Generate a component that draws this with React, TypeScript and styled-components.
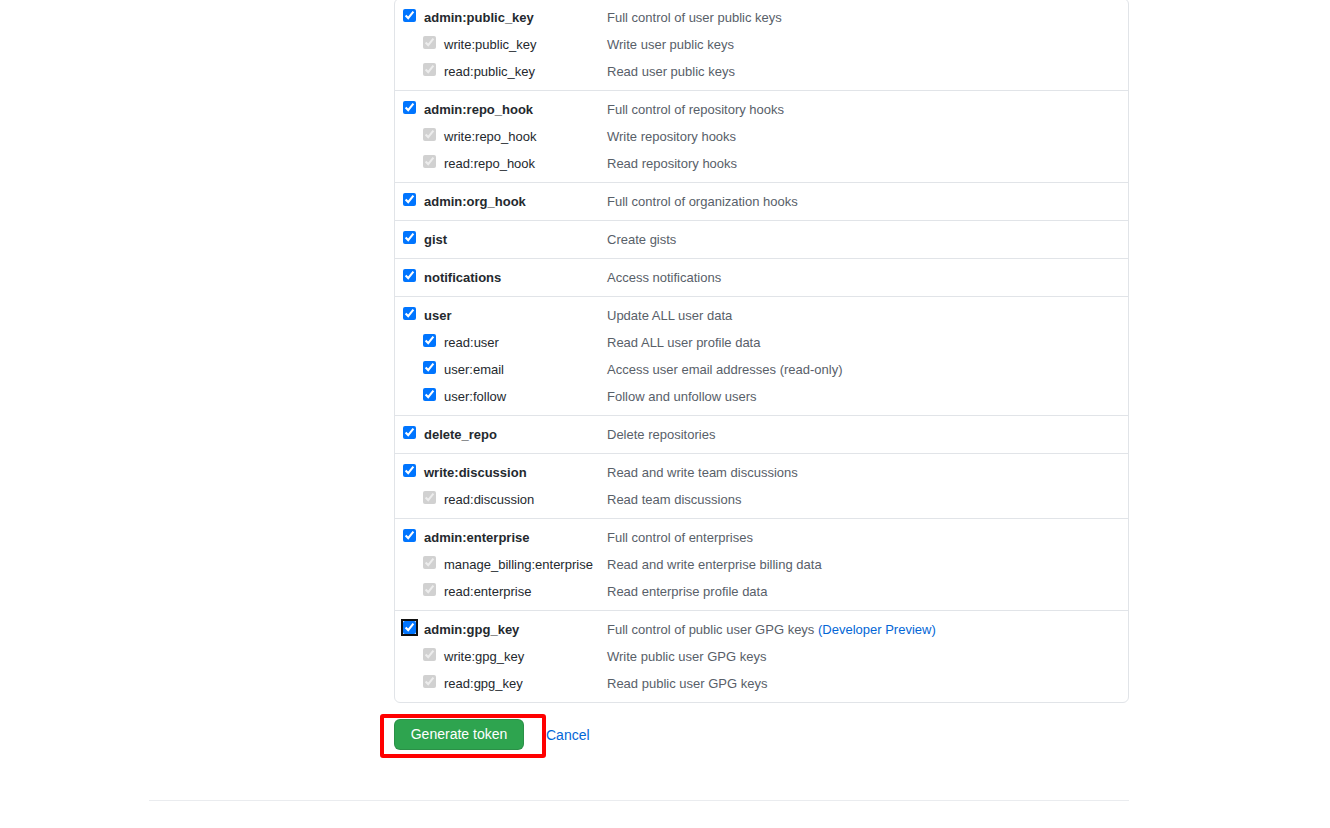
import React from "react";
import styled, { createGlobalStyle } from "styled-components";

const GlobalStyle = createGlobalStyle`
  body {
    margin: 0;
    background: #ffffff;
    font-family: "Liberation Sans", Arial, sans-serif;
    font-size: 14px;
    color: #24292e;
  }
`;

const Page = styled.div`
  width: 980px;
  margin-left: 149px;
`;

const Main = styled.div`
  margin-top: -2px;
  padding-left: 245px;
`;

const ScopeBox = styled.div`
  border: 1px solid #e1e4e8;
  border-radius: 6px;
  font-size: 13px;
`;

const Group = styled.div`
  padding: 5px 0;
  & + & {
    border-top: 1px solid #e1e4e8;
  }
`;

const Row = styled.div`
  display: grid;
  grid-template-columns: 212px 1fr;
  align-items: center;
  height: 27px;
`;

const LabelCell = styled.label<{ sub?: boolean }>`
  display: flex;
  align-items: center;
  gap: 8px;
  padding-left: ${(p) => (p.sub ? 28 : 8)}px;
  font-weight: ${(p) => (p.sub ? 400 : 700)};
  color: #24292e;
  white-space: nowrap;
`;

const Check = styled.input<{ focused?: boolean }>`
  margin: 0 0 4px 0;
  width: 13px;
  height: 13px;
  border-radius: 2px;
  outline: ${(p) => (p.focused ? "2px solid #101010" : "none")};
  outline-offset: 0;
`;

const Desc = styled.span`
  color: #586069;
`;

const DescLink = styled.a`
  color: #0366d6;
  text-decoration: none;
`;

const Actions = styled.div`
  position: relative;
  display: flex;
  align-items: center;
  margin-top: 16px;
`;

const GreenButton = styled.button`
  width: 130px;
  padding: 5px 0;
  font-family: inherit;
  font-size: 14px;
  line-height: 19px;
  color: #ffffff;
  background: #2ea44f;
  border: 1px solid rgba(27, 31, 35, 0.15);
  border-radius: 6px;
  cursor: pointer;
`;

const CancelLink = styled.a`
  margin-left: 22px;
  color: #0366d6;
  text-decoration: none;
`;

const Annotation = styled.div`
  position: absolute;
  left: -14px;
  top: -5px;
  width: 166px;
  height: 44px;
  box-sizing: border-box;
  border: 4px solid #ff0000;
  border-radius: 3px;
  pointer-events: none;
`;

const Footer = styled.div`
  margin-top: 50px;
  height: 40px;
  border-top: 1px solid #eaecef;
`;

type Sub = { name: string; desc: string };
type Scope = {
  name: string;
  desc: React.ReactNode;
  subs: Sub[];
  subsLocked?: boolean;
  focused?: boolean;
};

const scopes: Scope[] = [
  {
    name: "admin:public_key",
    desc: "Full control of user public keys",
    subsLocked: true,
    subs: [
      { name: "write:public_key", desc: "Write user public keys" },
      { name: "read:public_key", desc: "Read user public keys" },
    ],
  },
  {
    name: "admin:repo_hook",
    desc: "Full control of repository hooks",
    subsLocked: true,
    subs: [
      { name: "write:repo_hook", desc: "Write repository hooks" },
      { name: "read:repo_hook", desc: "Read repository hooks" },
    ],
  },
  { name: "admin:org_hook", desc: "Full control of organization hooks", subs: [] },
  { name: "gist", desc: "Create gists", subs: [] },
  { name: "notifications", desc: "Access notifications", subs: [] },
  {
    name: "user",
    desc: "Update ALL user data",
    subs: [
      { name: "read:user", desc: "Read ALL user profile data" },
      { name: "user:email", desc: "Access user email addresses (read-only)" },
      { name: "user:follow", desc: "Follow and unfollow users" },
    ],
  },
  { name: "delete_repo", desc: "Delete repositories", subs: [] },
  {
    name: "write:discussion",
    desc: "Read and write team discussions",
    subsLocked: true,
    subs: [{ name: "read:discussion", desc: "Read team discussions" }],
  },
  {
    name: "admin:enterprise",
    desc: "Full control of enterprises",
    subsLocked: true,
    subs: [
      { name: "manage_billing:enterprise", desc: "Read and write enterprise billing data" },
      { name: "read:enterprise", desc: "Read enterprise profile data" },
    ],
  },
  {
    name: "admin:gpg_key",
    desc: (
      <>
        Full control of public user GPG keys{" "}
        <DescLink href="#">(Developer Preview)</DescLink>
      </>
    ),
    focused: true,
    subsLocked: true,
    subs: [
      { name: "write:gpg_key", desc: "Write public user GPG keys" },
      { name: "read:gpg_key", desc: "Read public user GPG keys" },
    ],
  },
];

export default function App() {
  return (
    <>
      <GlobalStyle />
      <Page>
        <Main>
          <ScopeBox>
            {scopes.map((s) => (
              <Group key={s.name}>
                <Row>
                  <LabelCell>
                    <Check type="checkbox" checked readOnly focused={s.focused} />
                    {s.name}
                  </LabelCell>
                  <Desc>{s.desc}</Desc>
                </Row>
                {s.subs.map((sub) => (
                  <Row key={sub.name}>
                    <LabelCell sub>
                      <Check type="checkbox" checked readOnly disabled={s.subsLocked} />
                      {sub.name}
                    </LabelCell>
                    <Desc>{sub.desc}</Desc>
                  </Row>
                ))}
              </Group>
            ))}
          </ScopeBox>
          <Actions>
            <GreenButton type="button">Generate token</GreenButton>
            <CancelLink href="#">Cancel</CancelLink>
            <Annotation />
          </Actions>
        </Main>
        <Footer />
      </Page>
    </>
  );
}
